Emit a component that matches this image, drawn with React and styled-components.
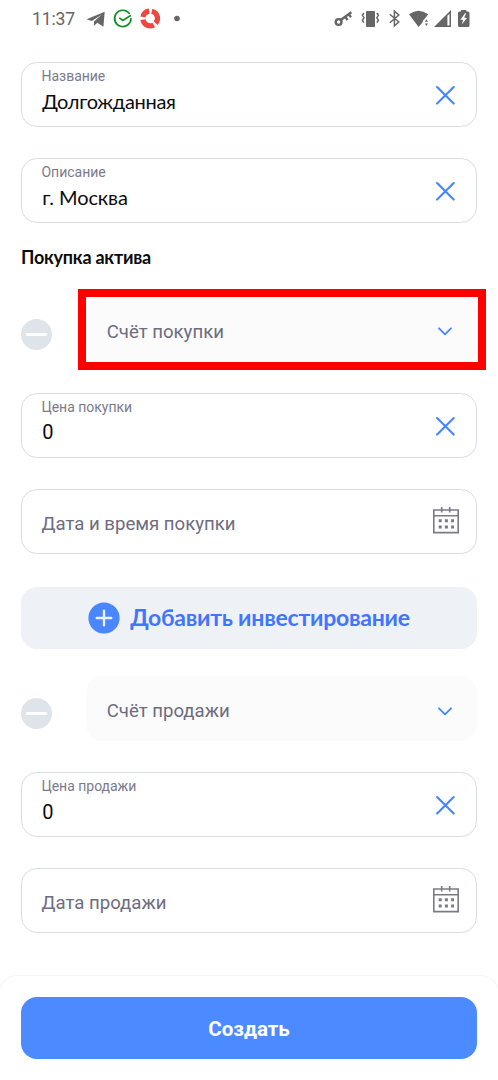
import React from 'react';
import styled, { createGlobalStyle } from 'styled-components';

const Global = createGlobalStyle`
  * { box-sizing: border-box; }
  body { margin: 0; background: #fff; font-family: Roboto, "Liberation Sans", sans-serif; }
  button { font: inherit; border: 0; padding: 0; margin: 0; background: none; }
`;

const Screen = styled.main`
  width: 498px;
  height: 1080px;
  overflow: hidden;
  display: flex;
  flex-direction: column;
  background: #fff;
`;

const StatusBar = styled.header`
  height: 38px;
  padding: 0 26px 0 32px;
  display: flex;
  align-items: center;
  justify-content: space-between;
  color: #666;
`;

const StatusGroup = styled.div`
  display: flex;
  align-items: center;
  svg { display: block; }
`;

const Clock = styled.span`
  width: 54px;
  font-size: 17.5px;
  line-height: 38px;
  letter-spacing: -0.1px;
  white-space: nowrap;
`;

const Form = styled.form`
  flex: 1;
  padding: 24.4px 21px 0;
  display: flex;
  flex-direction: column;
`;

const Field = styled.div`
  height: 65px;
  flex: none;
  margin-bottom: ${(p) => p.$gap ?? 31}px;
  padding: 0 15px 0 19.5px;
  border: 1.5px solid #d9dde4;
  border-radius: 16px;
  display: flex;
  align-items: center;
  justify-content: space-between;
`;

const FieldBody = styled.div`
  align-self: flex-start;
  padding-top: 4.9px;
  display: flex;
  flex-direction: column;
`;

const Label = styled.label`
  font-size: 14px;
  line-height: 17px;
  letter-spacing: -0.02px;
  color: #7b7a8c;
`;

const Value = styled.span`
  padding: ${(p) => (p.$numeric ? 3.5 : 2.8)}px 0 0 0.8px;
  font-family: ${(p) => (p.$numeric ? 'Roboto' : 'Lato')}, "Open Sans", sans-serif;
  font-size: 20px;
  line-height: 26px;
  letter-spacing: ${(p) => p.$track ?? -0.3}px;
  color: #0c0c0e;
`;

const Placeholder = styled.span`
  padding-top: 5.5px;
  font-size: 18.6px;
  line-height: 24px;
  color: #6d6c80;
`;

const IconButton = styled.button`
  width: 30px;
  height: 30px;
  margin-top: ${(p) => p.$drop ?? 1}px;
  display: grid;
  place-items: center;
  svg { display: block; }
`;

const Heading = styled.h2`
  margin: 1.6px 0 17.6px;
  font-family: Lato, "Open Sans", sans-serif;
  font-size: 18px;
  font-weight: 700;
  line-height: 28px;
  letter-spacing: -0.23px;
  color: #0c0c0e;
`;

const AccountRow = styled.div`
  display: flex;
  align-items: center;
  justify-content: space-between;
  margin: ${(p) => p.$margin};
`;

const RemoveButton = styled.button`
  width: 31px;
  height: 31px;
  margin-top: 10px;
  border-radius: 50%;
  background: #dfe4eb;
  display: grid;
  place-items: center;
  &::after {
    content: '';
    width: 21px;
    height: 3px;
    border-radius: 1px;
    background: #fff;
  }
`;

const Highlight = styled.div`
  border: 8px solid #ff0000;
`;

const Select = styled.div`
  width: ${(p) => p.$width}px;
  height: 65px;
  padding: 0 ${(p) => p.$width - 374}px 0 20.7px;
  border-radius: 16px;
  background: #fbfbfc;
  display: flex;
  align-items: center;
  justify-content: space-between;
`;

const AddButton = styled.button`
  height: 62px;
  flex: none;
  border-radius: 16px;
  background: #eef1f5;
  display: flex;
  align-items: center;
  justify-content: center;
  gap: 10px;
  svg { display: block; }
`;

const AddText = styled.span`
  padding-bottom: 2px;
  font-family: Lato, "Open Sans", sans-serif;
  font-size: 23px;
  font-weight: 700;
  line-height: 30px;
  letter-spacing: -0.23px;
  color: #4275ff;
  white-space: nowrap;
`;

const Footer = styled.footer`
  height: 105px;
  flex: none;
  padding: 20.5px 21px 0;
  border: 1px solid #f5f5f6;
  border-width: 1px 1px 0;
  margin: 0 -1px;
  border-radius: 18px 18px 0 0;
  background: #fff;
`;

const SubmitButton = styled.button`
  width: 456px;
  height: 62px;
  border-radius: 16px;
  background: #4c8aff;
  color: #fff;
`;

const SubmitText = styled.span`
  display: block;
  padding-top: 2px;
  font-size: 20.6px;
  font-weight: 700;
`;

const Clear = () => (
  <IconButton type="button" aria-label="Очистить">
    <svg width="20" height="20" viewBox="0 0 20 20" fill="none" stroke="#4785ff" strokeWidth="2.1" strokeLinecap="round">
      <path d="M1.1 2 17.7 18.6M17.7 2 1.1 18.6" />
    </svg>
  </IconButton>
);

const Chevron = () => (
  <IconButton type="button" aria-label="Открыть" $drop={5}>
    <svg width="14" height="9" viewBox="0 0 14 9" fill="none" stroke="#4785ff" strokeWidth="1.8" strokeLinecap="round" strokeLinejoin="round">
      <path d="M1 1.3 7 7.3 13 1.3" />
    </svg>
  </IconButton>
);

const Calendar = () => (
  <IconButton type="button" aria-label="Календарь" $drop={-1}>
    <svg width="28" height="34" viewBox="0 0 28 34" fill="none" stroke="#7b7a88" strokeWidth="1.6">
      <path d="M1.8 4H26.2V26.6H1.8ZM1.8 9.7H26.2M9.7 1V6.5M17.7 1V6.5" />
      <path strokeWidth="3" strokeDasharray="3 3.2" d="M6.7 14.8H22M6.7 21H22" />
    </svg>
  </IconButton>
);

const StatusLeft = () => (
  <svg width="96" height="24" viewBox="86 7 96 24">
    <path fill="#666" d="M86.6 19.3 104.7 11.8 103.4 26.8 97.3 22.8 93.8 26 94 21.6 101.6 14.8 91.8 20.9Z" />
    <g fill="none" stroke="#0d9125" strokeWidth="1.7" strokeLinecap="round" strokeLinejoin="round">
      <path d="M129.2 13.3A8.2 8.2 0 1 0 131 18.5" />
      <path d="M119.8 18.2 122.6 20.4 130.3 15.7" />
    </g>
    <g fill="none" stroke="#ec4840" strokeWidth="5.2">
      <path d="M149.2 11.2A7.3 7.3 0 0 0 142.9 17" />
      <path d="M151.8 11.2A7.3 7.3 0 0 1 155.6 23.3" />
      <path d="M142.9 19.7A7.3 7.3 0 0 0 153.8 24.9" />
    </g>
    <circle cx="177" cy="18.5" r="2.8" fill="#666" />
  </svg>
);

const StatusRight = () => (
  <svg width="138" height="24" viewBox="334 7 138 24" fill="none" stroke="#666">
    <circle cx="338.6" cy="22" r="2.9" strokeWidth="2.4" />
    <path strokeWidth="2.3" d="M340.7 20 351.4 12.2M345.3 16.8 347.6 20M348.7 14.2 351 17.2" />
    <rect x="366" y="11" width="9" height="16" rx="1" fill="#666" stroke="none" />
    <path strokeWidth="1.5" d="M363.9 13 362.4 15.3 364 17.7 362.4 20.2 363.9 22.6M376.9 13 378.4 15.3 376.8 17.7 378.4 20.2 376.9 22.6" />
    <path strokeWidth="1.5" d="M389.8 14.2 398.8 22 394.4 25.8V11.2L398.8 15 389.8 22.8" />
    <path fill="#666" stroke="none" d="M409 14.3Q418.5 7.2 428.2 14.3L424.6 19.1Q422.6 20.3 422.4 22.5L418.6 27Z" />
    <path fill="#666" stroke="none" d="M424.8 21.7 426.4 19.3 428 21.7ZM424.8 23.5H428L426.4 26Z" />
    <path fill="#666" stroke="none" d="M434 27 451 10V27ZM447.4 15.8V25.4H449.5V13.8Z" fillRule="evenodd" />
    <path fill="#666" stroke="none" d="M458 13Q458 11.5 459.5 11.5H461V10H466.3V11.5H468Q469.5 11.5 469.5 13V25.4Q469.5 27 468 27H459.5Q458 27 458 25.4Z" />
    <path fill="#fff" stroke="none" d="M465 13.2 460.4 19.7 463.2 20.1 461.7 24.6 467 18 464.1 17.4 466.2 13.5Z" />
  </svg>
);

export default function App() {
  return (
    <Screen>
      <Global />
      <StatusBar>
        <StatusGroup>
          <Clock>11:37</Clock>
          <StatusLeft />
        </StatusGroup>
        <StatusGroup>
          <StatusRight />
        </StatusGroup>
      </StatusBar>
      <Form>
        <Field>
          <FieldBody><Label>Название</Label><Value>Долгожданная</Value></FieldBody>
          <Clear />
        </Field>
        <Field $gap={18}>
          <FieldBody><Label>Описание</Label><Value $track={-0.1}>г. Москва</Value></FieldBody>
          <Clear />
        </Field>
        <Heading>Покупка актива</Heading>
        <AccountRow $margin="0 -9px 23.5px 0">
          <RemoveButton type="button" aria-label="Удалить" />
          <Highlight>
            <Select $width={392}><Placeholder>Счёт покупки</Placeholder><Chevron /></Select>
          </Highlight>
        </AccountRow>
        <Field>
          <FieldBody><Label>Цена покупки</Label><Value $numeric>0</Value></FieldBody>
          <Clear />
        </Field>
        <Field $gap={33.1}>
          <Placeholder>Дата и время покупки</Placeholder>
          <Calendar />
        </Field>
        <AddButton type="button">
          <svg width="32" height="32" viewBox="0 0 32 32">
            <circle cx="16" cy="16" r="15.6" fill="#4a86ff" />
            <path d="M16 8.8V23.2M8.8 16H23.2" stroke="#eef1f5" strokeWidth="2.4" strokeLinecap="round" />
          </svg>
          <AddText>Добавить инвестирование</AddText>
        </AddButton>
        <AccountRow $margin="27px 0 31px">
          <RemoveButton type="button" aria-label="Удалить" />
          <Select $width={391}><Placeholder>Счёт продажи</Placeholder><Chevron /></Select>
        </AccountRow>
        <Field>
          <FieldBody><Label>Цена продажи</Label><Value $numeric>0</Value></FieldBody>
          <Clear />
        </Field>
        <Field $gap={0}>
          <Placeholder>Дата продажи</Placeholder>
          <Calendar />
        </Field>
      </Form>
      <Footer>
        <SubmitButton type="button"><SubmitText>Создать</SubmitText></SubmitButton>
      </Footer>
    </Screen>
  );
}
